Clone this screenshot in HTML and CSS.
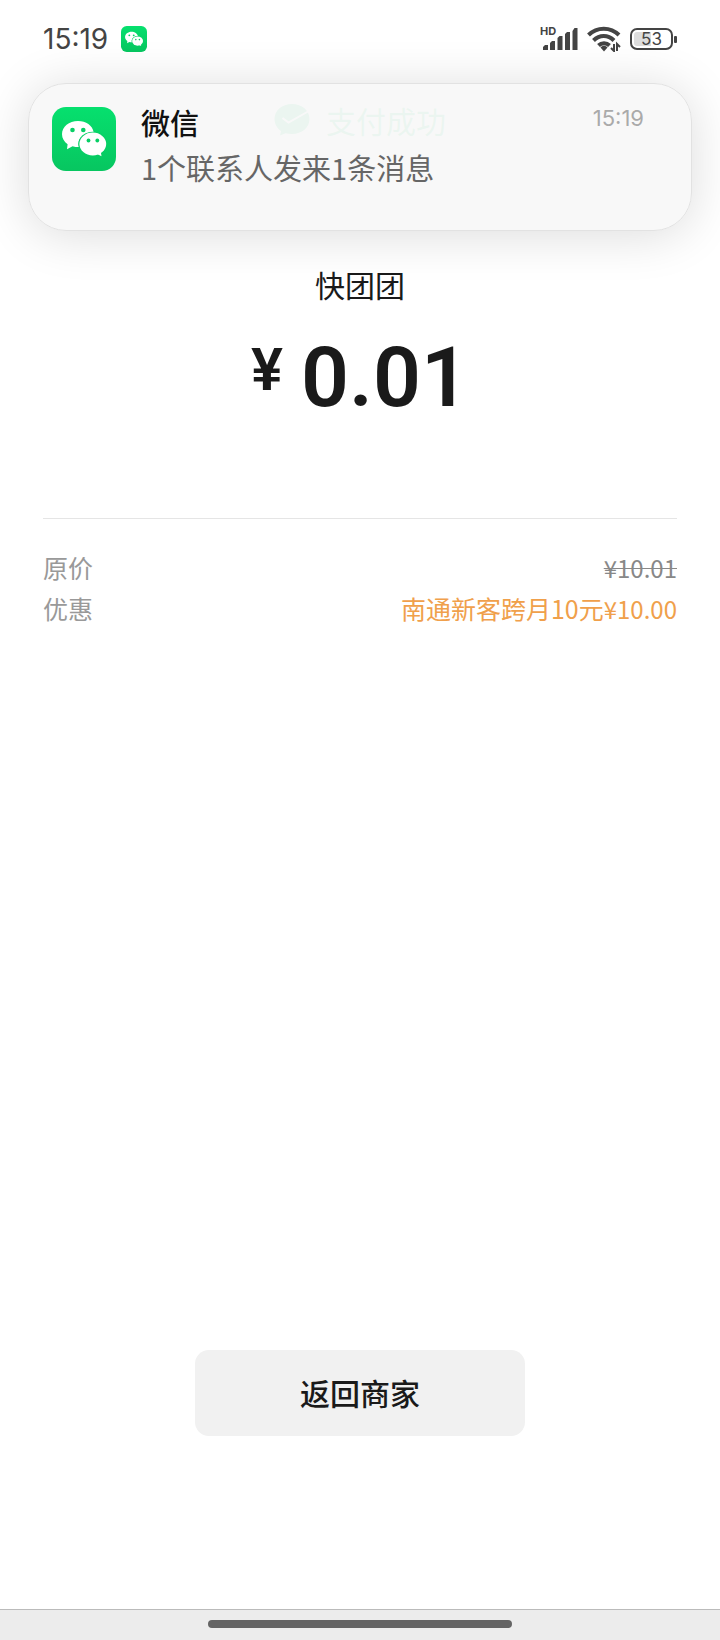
FILE: index.html
```html
<!DOCTYPE html>
<html lang="zh-CN">
<head>
    <meta charset="UTF-8">
    <meta name="viewport" content="width=device-width, initial-scale=1.0">
    <title>支付成功</title>
    <link rel="stylesheet" href="styles.css">
</head>
<body>
    <svg class="sprite" aria-hidden="true">
        <defs>
            <linearGradient id="verde" x1="0" y1="0" x2="0" y2="1">
                <stop offset="0" stop-color="#06e06e"/>
                <stop offset="1" stop-color="#07c660"/>
            </linearGradient>
        </defs>
        <symbol id="wechat" viewBox="0 0 64 64">
            <rect width="64" height="64" rx="14" fill="url(#verde)"/>
            <path fill="#fff" d="M26 14C17 14 10 19.800 10 27.200c0 4 2.200 7.600 5.600 10L15 42.300l5.500-3c2 .6 4 .8 6.300.8A13 13 0 0 1 26.300 37C26.300 30.200 33 25 41.600 25C40.500 18.500 34 14 26 14z"/>
            <ellipse cx="40.800" cy="37" rx="14.300" ry="12.300" fill="#07cf65"/>
            <ellipse cx="40.800" cy="37" rx="13.400" ry="11.400" fill="#fff"/>
            <path fill="#fff" d="M44 46.500l5.500 2.800-.8-5z"/>
            <g fill="#07cf65">
                <circle cx="20.500" cy="23" r="2.300"/>
                <circle cx="31.300" cy="23" r="2.300"/>
                <circle cx="36.500" cy="33.500" r="1.900"/>
                <circle cx="45.300" cy="33.500" r="1.900"/>
            </g>
        </symbol>
    </svg>

    <header class="status-bar">
        <div class="status-left">
            <span>15:19</span>
            <svg class="status-app" viewBox="0 0 64 64"><use href="#wechat"/></svg>
        </div>
        <div class="status-right">
            <div class="signal">
                <span class="hd">HD</span>
                <svg width="36" height="24" viewBox="0 0 36 24" fill="#444">
                    <path d="M1 23v-3l2-2h3v5zM8 23v-7l2-2h3v9zM15.500 23V11l2-2h3v14zM23 23V7l2-2h3v18zM30.500 23V4l2-3h3v22z"/>
                </svg>
            </div>
            <svg width="34" height="26" viewBox="0 0 34 26" fill="none" stroke="#444" stroke-width="4">
                <path d="M1.500 9C10 .500 23.500 .500 32 9M6.500 14.500c6-6 14.500-6 20.500 0M11.500 19.500c3-3 8-3 11 0"/>
                <path fill="#444" stroke="none" d="M13.500 21.500c2-2.500 5-2.500 7 0L17 25.500z"/>
                <path stroke-width="2" d="M27 18v7l-3-3M30 25v-7l3 3"/>
            </svg>
            <div class="battery"><span>53</span></div>
        </div>
    </header>

    <section class="notification">
        <svg class="notification-icon" viewBox="0 0 64 64"><use href="#wechat"/></svg>
        <div class="notification-text">
            <strong>微信</strong>
            <p>1个联系人发来1条消息</p>
        </div>
        <time>15:19</time>
    </section>

    <main>
        <div class="success">
            <svg width="36" height="34" viewBox="0 0 36 34">
                <path fill="#07c160" d="M18 1C8 1 .500 7.500 .500 16c0 5 2.500 9.200 6.500 12l-1 4.500 5.500-2.300c2 .6 4.200.8 6.500.8 10 0 17.500-6.500 17.500-15S28 1 18 1z"/>
                <path fill="none" stroke="#fff" stroke-width="2" d="M8.500 15l6 4.500L34 8.500"/>
            </svg>
            <span>支付成功</span>
        </div>
        <h1>快团团</h1>
        <div class="amount"><span class="currency">¥</span><span>0.01</span></div>
        <dl class="details">
            <div class="row">
                <dt>原价</dt>
                <dd><del>¥10.01</del></dd>
            </div>
            <div class="row">
                <dt>优惠</dt>
                <dd class="discount">南通新客跨月10元<span>¥10.00</span></dd>
            </div>
        </dl>
        <button type="button" class="back">返回商家</button>
    </main>

    <footer class="nav-bar"><div class="handle"></div></footer>
</body>
</html>
```

FILE: styles.css
```css
* {
    box-sizing: border-box;
}
body {
    margin: 0;
    min-height: 100vh;
    display: flex;
    flex-direction: column;
    position: relative;
    background-color: #fff;
    color: #1a1a1a;
    font-family: "Noto Sans CJK SC", sans-serif;
}
.sprite {
    position: absolute;
    width: 0;
    height: 0;
}
.status-bar {
    height: 78px;
    padding: 0 43px;
    display: flex;
    justify-content: space-between;
    align-items: center;
    color: #444;
    font-family: Inter, sans-serif;
}
.status-left {
    display: flex;
    align-items: center;
    gap: 13px;
    font-size: 28px;
    font-weight: 400;
}
.status-app {
    width: 26px;
    height: 26px;
}
.status-right {
    display: flex;
    align-items: center;
    gap: 9px;
}
.signal {
    position: relative;
    display: flex;
}
.hd {
    position: absolute;
    left: -2px;
    top: -1px;
    font-size: 11px;
    line-height: 11px;
    font-weight: 700;
}
.battery {
    position: relative;
    width: 43px;
    height: 22px;
    margin-right: 4px;
    border: 2px solid #444;
    border-radius: 7px;
    background: linear-gradient(90deg, #ddd 50%, transparent 50%) content-box;
    padding: 2px;
    font-size: 17px;
    line-height: 14px;
    text-align: center;
}
.battery::after {
    content: "";
    position: absolute;
    right: -6px;
    top: 6px;
    width: 3px;
    height: 7px;
    border-radius: 1px;
    background-color: #444;
}
.notification {
    position: absolute;
    top: 83px;
    left: 28px;
    right: 28px;
    z-index: 1;
    height: 148px;
    padding: 23px 47px 0 23px;
    display: flex;
    border: 1px solid #e2e2e2;
    border-radius: 38px;
    background-color: rgba(248, 248, 248, 0.95);
    box-shadow: 0 4px 50px rgba(0, 0, 0, 0.14);
}
.notification-icon {
    width: 64px;
    height: 64px;
}
.notification-text {
    flex: 1;
    margin-left: 25px;
    font-size: 29px;
    color: #666;
}
.notification-text strong {
    display: block;
    line-height: 30px;
    font-weight: 500;
    color: #111;
}
.notification-text p {
    margin: 12px 0 0;
    line-height: 36px;
    font-weight: 400;
}
.notification time {
    font-family: Inter, sans-serif;
    font-size: 22px;
    line-height: 22px;
    font-weight: 400;
    color: #aaa;
}
main {
    flex: 1;
    padding: 20px 43px 0;
    display: flex;
    flex-direction: column;
}
.success {
    display: flex;
    justify-content: center;
    align-items: center;
    gap: 16px;
    line-height: 44px;
    font-size: 30px;
    color: #07c160;
}
h1 {
    margin: 120px 0 0;
    text-align: center;
    font-size: 30px;
    line-height: 44px;
    font-weight: 400;
}
.amount {
    margin-top: 22px;
    display: flex;
    justify-content: center;
    align-items: flex-start;
    gap: 18px;
    font-family: Roboto, sans-serif;
    font-size: 84px;
    line-height: 100px;
    font-weight: 600;
}
.currency {
    font-size: 60px;
    line-height: 84px;
}
.details {
    margin: 90px 0 0;
    padding-top: 28px;
    border-top: 1px solid #e5e5e5;
    font-size: 25px;
    line-height: 40px;
    color: #999;
}
.row {
    display: flex;
    justify-content: space-between;
}
dd {
    margin: 0;
}
del,
.discount span {
    font-size: 24px;
}
del {
    color: #888;
    text-decoration-thickness: 1px;
}
.discount {
    color: #f0a04b;
}
.back {
    align-self: center;
    width: 52%;
    height: 86px;
    margin: auto 0 173px;
    padding: 0 0 2px;
    border: 0;
    border-radius: 14px;
    background-color: #f1f1f1;
    color: #1a1a1a;
    font-family: inherit;
    font-size: 30px;
    font-weight: 500;
}
.nav-bar {
    height: 31px;
    padding-bottom: 2px;
    display: flex;
    justify-content: center;
    align-items: center;
    border-top: 1px solid #bbb;
    background-color: #ececec;
}
.handle {
    width: 304px;
    height: 8px;
    border-radius: 4px;
    background-color: #646464;
}
```
